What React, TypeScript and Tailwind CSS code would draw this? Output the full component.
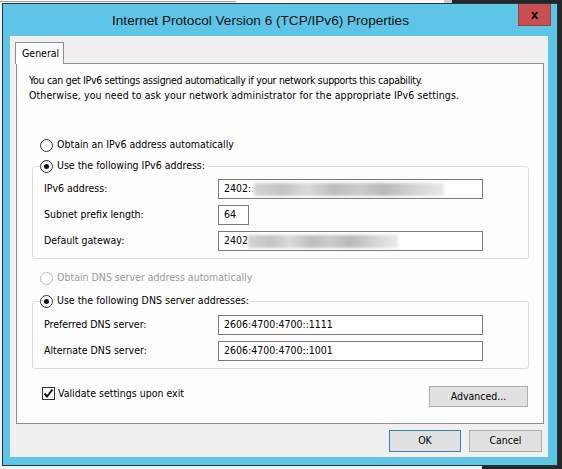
import React from "react";

function Radio({ checked, disabled }: { checked?: boolean; disabled?: boolean }) {
  return (
    <span
      className={
        "w-[13px] h-[13px] rounded-full border bg-white flex items-center justify-center shrink-0 " +
        (disabled ? "border-[#bcbcbc]" : "border-[#333333]")
      }
    >
      {checked && <span className="w-[5px] h-[5px] rounded-full bg-[#111]" />}
    </span>
  );
}

function Blur({ w }: { w: number }) {
  return (
    <span
      className="inline-block h-[13px] blur-[1.5px] bg-[linear-gradient(90deg,#d4d4d4_0%,#c2c2c2_15%,#dadada_28%,#bdbdbd_42%,#cbcbcb_55%,#b9b9b9_68%,#cfcfcf_82%,#eaeaea_100%)]"
      style={{ width: w }}
    />
  );
}

function Field({ children, w = 265 }: { children: React.ReactNode; w?: number }) {
  return (
    <div
      className="h-[20px] border border-[#7a7a7a] bg-white flex items-center pl-[5px] text-black overflow-hidden whitespace-nowrap"
      style={{ width: w }}
    >
      {children}
    </div>
  );
}

function Row({ label, children }: { label: string; children: React.ReactNode }) {
  return (
    <div className="flex items-center h-[20px]">
      <div className="w-[174px] text-black">{label}</div>
      {children}
    </div>
  );
}

export default function App() {
  return (
    <div
      className="relative w-[562px] h-[469px] overflow-hidden bg-[#f3f3f3] font-stretch-condensed text-[10.5px] tracking-[0px]"
      style={{ fontFamily: '"DejaVu Sans", sans-serif' }}
    >
      {/* desktop behind */}
      <div className="absolute left-0 top-0 w-[236px] h-[2px] bg-white border-b border-[#a0a0a0]" />
      <div className="absolute left-[236px] top-0 w-[208px] h-[3px] bg-[#fafafa]" />
      <div className="absolute left-[444px] top-0 w-[8px] h-[3px] bg-[#c8c8c8]" />
      <div className="absolute left-[452px] top-0 right-0 h-[3px] bg-[#232826]" />
      <div className="absolute left-[557px] top-0 right-0 bottom-0 bg-[#232826]" />
      <div className="absolute left-[482px] top-[465px] right-0 bottom-0 bg-[#232826]" />

      {/* dialog window */}
      <div className="absolute left-[2px] top-[3px] w-[556px] h-[463px] border border-[#27363c] bg-[#5ec5e7] flex flex-col">
        <div className="relative h-[32px] shrink-0 flex items-center pr-[39px]">
          <span
            className="flex-1 text-center text-[13.6px] tracking-normal font-stretch-normal text-[#111] mt-[2px]"
            style={{ fontFamily: '"Liberation Sans", sans-serif' }}
          >
            Internet Protocol Version 6 (TCP/IPv6) Properties
          </span>
          <div className="absolute right-[6px] top-0 w-[33px] h-[22px] bg-[#c75050] border border-[#9b3e3e] border-t-0 flex items-center justify-center">
            <span
              className="text-[13px] font-bold text-black leading-none font-stretch-normal"
              style={{ fontFamily: '"Liberation Sans", sans-serif' }}
            >
              x
            </span>
          </div>
        </div>

        <div className="ml-[7px] mr-[9px] h-[421px] bg-[#f0f0f0] flex flex-col pt-[6px] pl-[5px] pr-[4px]">
          {/* tab */}
          <div className="relative z-10 h-[22px] -mb-[1px] w-[49px] border border-b-0 border-[#8e8f8f] bg-[#fdfdfd] text-black pl-[6px] pt-[3px]">
            General
          </div>
          {/* panel */}
          <div className="ml-[1px] h-[361px] border border-[#8e8f8f] bg-[#fdfdfd] flex flex-col">
            <div className="pl-[12px] pt-[9px] leading-[15px] text-black">
              <div className="tracking-[-0.3px]">
                You can get IPv6 settings assigned automatically if your network supports this capability.
              </div>
              <div className="tracking-[0.1px]">
                Otherwise, you need to ask your network administrator for the appropriate IPv6 settings.
              </div>
            </div>

            <div className="mt-[34px] ml-[23px] h-[16px] flex items-center gap-[4px] text-black">
              <Radio />
              <span>Obtain an IPv6 address automatically</span>
            </div>

            {/* group 1 */}
            <div className="relative mt-[13px] ml-[15px] mr-[14px] border border-[#dcdcdc] rounded-[3px] pt-[12px] pb-[7px] pl-[11px] flex flex-col gap-[6px]">
              <div className="absolute left-[7px] -top-[9px] h-[16px] pr-[2px] bg-[#fdfdfd] flex items-center gap-[4px] text-black">
                <Radio checked />
                <span>Use the following IPv6 address:</span>
              </div>
              <Row label="IPv6 address:">
                <Field>
                  <span>2402:</span>
                  <span className="text-[#999]">:</span>
                  <Blur w={190} />
                </Field>
              </Row>
              <Row label="Subnet prefix length:">
                <Field w={31}>64</Field>
              </Row>
              <Row label="Default gateway:">
                <Field>
                  <span>2402</span>
                  <Blur w={150} />
                </Field>
              </Row>
            </div>

            <div className="mt-[11px] ml-[23px] h-[16px] flex items-center gap-[4px] text-[#9a9a9a]">
              <Radio disabled />
              <span>Obtain DNS server address automatically</span>
            </div>

            {/* group 2 */}
            <div className="relative mt-[15px] ml-[15px] mr-[14px] border border-[#dcdcdc] rounded-[3px] pt-[13px] pb-[7px] pl-[11px] flex flex-col gap-[6px]">
              <div className="absolute left-[7px] -top-[9px] h-[16px] pr-[2px] bg-[#fdfdfd] flex items-center gap-[4px] text-black">
                <Radio checked />
                <span>Use the following DNS server addresses:</span>
              </div>
              <Row label="Preferred DNS server:">
                <Field>2606:4700:4700::1111</Field>
              </Row>
              <Row label="Alternate DNS server:">
                <Field>2606:4700:4700::1001</Field>
              </Row>
            </div>

            <div className="mt-[17px] ml-[25px] mr-[15px] flex items-start justify-between">
              <div className="flex items-center gap-[3px] text-black">
                <span className="w-[13px] h-[13px] border border-[#333] bg-white flex items-center justify-center">
                  <svg width="11" height="11" viewBox="0 0 11 11">
                    <path d="M1.5 5.5 L4 8.5 L9.5 1.5" fill="none" stroke="#111" strokeWidth="2" />
                  </svg>
                </span>
                <span>Validate settings upon exit</span>
              </div>
              <button className="w-[99px] h-[21px] border border-[#adadad] bg-[#e1e1e1] text-black">
                Advanced...
              </button>
            </div>
          </div>

          {/* buttons */}
          <div className="mt-[6px] flex justify-end gap-[8px] pr-[2px]">
            <button className="w-[72px] h-[22px] border border-[#3c7fb1] bg-[#e1e1e1] text-black">OK</button>
            <button className="w-[73px] h-[22px] border border-[#adadad] bg-[#e1e1e1] text-black">Cancel</button>
          </div>
        </div>
      </div>
    </div>
  );
}
